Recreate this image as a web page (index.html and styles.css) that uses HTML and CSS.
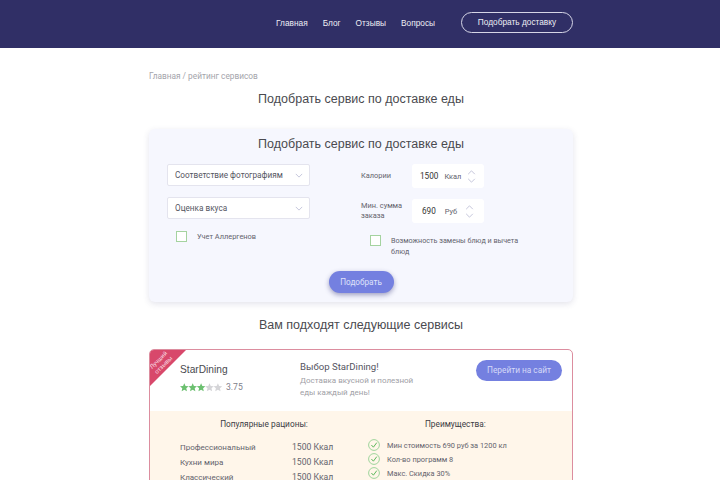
FILE: index.html
```html
<!DOCTYPE html>
<html lang="ru">
<head>
    <meta charset="UTF-8">
    <meta name="viewport" content="width=device-width, initial-scale=1.0">
    <title>Подобрать сервис</title>
    <link rel="stylesheet" href="styles.css">
</head>
<body>
    <header class="header">
        <nav class="nav">
            <a href="#">Главная</a>
            <a href="#">Блог</a>
            <a href="#">Отзывы</a>
            <a href="#">Вопросы</a>
        </nav>
        <a class="header-btn" href="#">Подобрать доставку</a>
    </header>

    <main class="container">
        <div class="breadcrumbs">Главная / рейтинг сервисов</div>
        <h1 class="page-title">Подобрать сервис по доставке еды</h1>

        <section class="filter">
            <h2 class="filter-title">Подобрать сервис по доставке еды</h2>
            <div class="filter-grid">
                <div class="filter-col">
                    <div class="select">
                        <span>Соответствие фотографиям</span>
                        <svg class="chevron" viewBox="0 0 10 6"><path d="M1 1l4 4 4-4"/></svg>
                    </div>
                    <div class="select">
                        <span>Оценка вкуса</span>
                        <svg class="chevron" viewBox="0 0 10 6"><path d="M1 1l4 4 4-4"/></svg>
                    </div>
                    <label class="check check-left"><i class="box"></i><span>Учет Аллергенов</span></label>
                </div>
                <div class="filter-col filter-col-right">
                    <div class="field">
                        <div class="field-label">Калории</div>
                        <div class="stepper">
                            <b>1500</b><span>Ккал</span>
                            <div class="arrows">
                                <svg viewBox="0 0 10 6"><path d="M1 5l4-4 4 4"/></svg>
                                <svg viewBox="0 0 10 6"><path d="M1 1l4 4 4-4"/></svg>
                            </div>
                        </div>
                    </div>
                    <div class="field field-second">
                        <div class="field-label">Мин. сумма заказа</div>
                        <div class="stepper stepper-short">
                            <b>690</b><span>Руб</span>
                            <div class="arrows">
                                <svg viewBox="0 0 10 6"><path d="M1 5l4-4 4 4"/></svg>
                                <svg viewBox="0 0 10 6"><path d="M1 1l4 4 4-4"/></svg>
                            </div>
                        </div>
                    </div>
                    <label class="check check-right"><i class="box"></i><span>Возможность замены блюд и вычета блюд</span></label>
                </div>
            </div>
            <button class="filter-btn">Подобрать</button>
        </section>

        <h2 class="result-title">Вам подходят следующие сервисы</h2>

        <article class="card">
            <div class="ribbon"><span>Лучший<br>отзывы</span></div>
            <div class="card-top">
                <div class="card-name">
                    <div class="brand">StarDining</div>
                    <div class="rating">
                        <svg class="stars" viewBox="0 0 44 9">
                            <path class="on" d="M4.5 0l1.3 2.9 3.2.3-2.4 2.1.7 3.1-2.8-1.6-2.8 1.6.7-3.1L0 3.2l3.2-.3z"/>
                            <path class="on" transform="translate(8.8)" d="M4.5 0l1.3 2.9 3.2.3-2.4 2.1.7 3.1-2.8-1.6-2.8 1.6.7-3.1L0 3.2l3.2-.3z"/>
                            <path class="on" transform="translate(17.6)" d="M4.5 0l1.3 2.9 3.2.3-2.4 2.1.7 3.1-2.8-1.6-2.8 1.6.7-3.1L0 3.2l3.2-.3z"/>
                            <path class="off" transform="translate(26.4)" d="M4.5 0l1.3 2.9 3.2.3-2.4 2.1.7 3.1-2.8-1.6-2.8 1.6.7-3.1L0 3.2l3.2-.3z"/>
                            <path class="off" transform="translate(35.2)" d="M4.5 0l1.3 2.9 3.2.3-2.4 2.1.7 3.1-2.8-1.6-2.8 1.6.7-3.1L0 3.2l3.2-.3z"/>
                        </svg>
                        <span>3.75</span>
                    </div>
                </div>
                <div class="card-desc">
                    <div class="desc-title">Выбор StarDining!</div>
                    <p>Доставка вкусной и полезной еды каждый день!</p>
                </div>
                <a class="site-btn" href="#">Перейти на сайт</a>
            </div>
            <div class="card-bottom">
                <div class="diets">
                    <h3>Популярные рационы:</h3>
                    <div class="diet"><span>Профессиональный</span><span>1500 Ккал</span></div>
                    <div class="diet"><span>Кухни мира</span><span>1500 Ккал</span></div>
                    <div class="diet"><span>Классический</span><span>1500 Ккал</span></div>
                </div>
                <div class="pros">
                    <h3>Преимущества:</h3>
                    <div class="pro"><svg viewBox="0 0 12 12"><circle cx="6" cy="6" r="5.4"/><path d="M3.4 6l2 2.2 3.4-4.6"/></svg>Мин стоимость 690 руб за 1200 кл</div>
                    <div class="pro"><svg viewBox="0 0 12 12"><circle cx="6" cy="6" r="5.4"/><path d="M3.4 6l2 2.2 3.4-4.6"/></svg>Кол-во программ 8</div>
                    <div class="pro"><svg viewBox="0 0 12 12"><circle cx="6" cy="6" r="5.4"/><path d="M3.4 6l2 2.2 3.4-4.6"/></svg>Макс. Скидка 30%</div>
                </div>
            </div>
        </article>
    </main>
</body>
</html>
```

FILE: styles.css
```css
html, body {
    height: 480px;
    overflow: hidden;
}

body {
    margin: 0;
    background: white;
    font-family: Roboto, "Noto Sans", sans-serif;
    color: #55555f;
}

h1, h2, h3, p {
    margin: 0;
    font-weight: normal;
}

a {
    text-decoration: none;
    color: inherit;
}

.header {
    height: 48px;
    background: #302f66;
    display: flex;
    justify-content: flex-end;
    padding: 12px 147px 0 0;
    box-sizing: border-box;
    font-family: "Liberation Sans", sans-serif;
    font-size: 8.3px;
    color: #eeeef5;
}

.nav {
    display: flex;
    gap: 15px;
    height: 21px;
    align-items: center;
    margin-right: 26px;
}

.header-btn {
    width: 112px;
    height: 21px;
    line-height: 19px;
    box-sizing: border-box;
    border: 1px solid #d5d5e6;
    border-radius: 11px;
    text-align: center;
}

.container {
    width: 424px;
    margin-left: 149px;
}

.breadcrumbs {
    margin-top: 22px;
    height: 13px;
    line-height: 13px;
    font-size: 8.3px;
    color: #a4a4ab;
}

.page-title, .filter-title, .result-title {
    font-family: "Liberation Sans", sans-serif;
    font-size: 12.5px;
    color: #4a4a4f;
    text-align: center;
    line-height: 16px;
}

.page-title {
    margin-top: 8px;
}

.filter {
    margin-top: 22px;
    height: 173px;
    box-sizing: border-box;
    padding-top: 7px;
    background: #f6f7fe;
    border-radius: 6px;
    box-shadow: 0 2px 6px rgba(60, 60, 110, 0.14);
    display: flex;
    flex-direction: column;
    align-items: center;
}

.filter-grid {
    align-self: stretch;
    display: flex;
    margin-top: 12px;
    padding-left: 18px;
    height: 107px;
}

.filter-col {
    width: 143px;
    display: flex;
    flex-direction: column;
}

.filter-col-right {
    width: 123px;
    margin-left: 51px;
}

.select {
    height: 22px;
    box-sizing: border-box;
    margin-bottom: 11px;
    padding: 0 6px 0 7px;
    background: white;
    border: 1px solid #e4e4ee;
    border-radius: 2px;
    display: flex;
    justify-content: space-between;
    align-items: center;
    font-size: 8.2px;
}

.chevron {
    width: 8px;
    height: 5px;
}

svg path {
    fill: none;
    stroke: #b9bad4;
    stroke-width: 1;
}

.check {
    display: flex;
    font-size: 7.4px;
    line-height: 11px;
    color: #63636d;
}

.box {
    flex: none;
    box-sizing: border-box;
    width: 11px;
    height: 11px;
    background: white;
    border: 1px solid #a5d3a0;
}

.check-left {
    margin: 1px 0 0 9px;
    gap: 10px;
}

.check-right {
    margin: 12px -51px 0 9px;
    gap: 10px;
    font-size: 7.2px;
}

.field {
    display: flex;
    align-items: center;
}

.field-second {
    margin-top: 11px;
}

.field-label {
    width: 51px;
    font-size: 7.4px;
    line-height: 10px;
    color: #63636d;
}

.stepper {
    width: 72px;
    height: 24px;
    box-sizing: border-box;
    padding: 0 8px;
    background: white;
    border-radius: 3px;
    display: flex;
    align-items: center;
    font-size: 7.4px;
    color: #63636d;
}

.stepper b {
    font-weight: normal;
    font-size: 8.2px;
    color: #333;
    margin-right: 6px;
}

.stepper-short {
    padding: 0 10px;
}

.stepper-short b {
    margin-right: 9px;
}

.arrows {
    margin-left: auto;
    display: flex;
    flex-direction: column;
    gap: 3px;
}

.arrows svg {
    display: block;
    width: 9px;
    height: 5px;
}

.filter-btn {
    width: 65px;
    height: 22px;
    padding: 0;
    border: none;
    border-radius: 11px;
    background: #7480e0;
    box-shadow: 0 2px 5px rgba(50, 50, 120, 0.45);
    color: #dfe2fa;
    font-family: inherit;
    font-size: 8.2px;
}

.result-title {
    margin-top: 15px;
}

.card {
    position: relative;
    margin-top: 16px;
    box-sizing: border-box;
    border: 1px solid #dc8d9f;
    border-radius: 5px;
    overflow: hidden;
}

.ribbon {
    position: absolute;
    top: 0;
    left: 0;
    width: 36px;
    height: 36px;
    background: #d8486b;
    clip-path: polygon(0 0, 100% 0, 0 100%);
}

.ribbon span {
    position: absolute;
    top: 6px;
    left: -4px;
    width: 30px;
    transform: rotate(-45deg);
    text-align: center;
    font-size: 6px;
    line-height: 6.5px;
    color: #f8dbe2;
}

.card-top {
    height: 61px;
    display: flex;
    padding-left: 30px;
}

.card-name {
    width: 120px;
    padding-top: 13px;
}

.brand {
    font-family: "Liberation Sans", sans-serif;
    font-size: 10.2px;
    line-height: 14px;
    color: #4a4a4f;
}

.rating {
    display: flex;
    align-items: center;
    gap: 4px;
    margin-top: 5px;
    font-size: 8.6px;
    color: #80808a;
}

.stars {
    width: 42px;
    height: 9px;
}

.stars path {
    stroke: none;
}

.stars .on {
    fill: #6cc070;
}

.stars .off {
    fill: #d5d5d8;
}

.card-desc {
    width: 128px;
    padding-top: 10px;
    font-size: 8px;
}

.desc-title {
    font-size: 9.6px;
    line-height: 14px;
}

.card-desc p {
    margin-top: 1px;
    color: #a0a0a6;
    line-height: 12px;
}

.site-btn {
    margin: 10px 0 0 48px;
    width: 86px;
    height: 21px;
    line-height: 21px;
    border-radius: 11px;
    background: #7480e0;
    color: #d6daf8;
    text-align: center;
    font-size: 8.3px;
}

.card-bottom {
    background: #fff6ea;
    height: 120px;
    display: flex;
    padding-left: 30px;
}

h3 {
    font-size: 8.3px;
    line-height: 12px;
    color: #3c3c44;
    text-align: center;
}

.diets {
    width: 168px;
    padding-top: 7px;
}

.diet {
    display: flex;
    height: 15px;
    line-height: 15px;
    font-size: 8.6px;
    color: #63636d;
}

.diets h3 {
    margin-bottom: 10px;
}

.diet span:first-child {
    width: 112px;
    font-size: 8px;
}

.pros {
    margin-left: 20px;
    padding-top: 7px;
    font-size: 7.4px;
    color: #63636d;
}

.pros h3 {
    margin-bottom: 8px;
    padding-left: 36px;
}

.pro {
    display: flex;
    align-items: center;
    gap: 7px;
    height: 14px;
}

.pro svg {
    width: 12px;
    height: 12px;
}

.pro circle {
    fill: none;
    stroke: #9fd49c;
}

.pro path {
    stroke: #5cb85c;
}
```
